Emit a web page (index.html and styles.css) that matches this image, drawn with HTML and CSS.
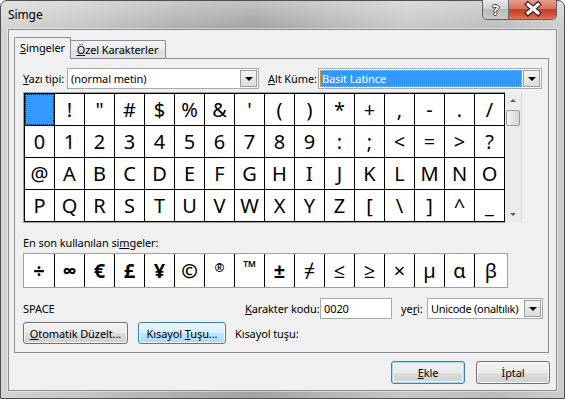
FILE: index.html
```html
<!DOCTYPE html>
<html lang="tr">
<head>
    <meta charset="UTF-8">
    <title>Simge</title>
    <link rel="stylesheet" href="styles.css">
</head>
<body>
<div class="window">
    <div class="titlebar">
        <span class="title">Simge</span>
        <div class="caption">
            <span class="cap help">?</span>
            <span class="cap close">
                <svg width="46" height="19" viewBox="0 0 46 19">
                    <path d="M18 4.5 L28 13 M28 4.5 L18 13" stroke="#3b2a26" stroke-width="5.5" stroke-linecap="square"/>
                    <path d="M18 4.5 L28 13 M28 4.5 L18 13" stroke="#fff" stroke-width="3" stroke-linecap="square"/>
                </svg>
            </span>
        </div>
    </div>

    <div class="client">
        <div class="tabs">
            <span class="tab active"><u>S</u>imgeler</span>
            <span class="tab"><u>Ö</u>zel Karakterler</span>
        </div>

        <div class="panel">
            <div class="row font-row">
                <label class="lbl-font"><u>Y</u>azı tipi:</label>
                <div class="combo combo-font">
                    <span class="combo-text">(normal metin)</span>
                    <span class="drop"></span>
                </div>
                <label class="lbl-subset"><u>A</u>lt Küme:</label>
                <div class="combo combo-subset">
                    <span class="combo-text sel">Basit Latince</span>
                    <span class="drop"></span>
                </div>
            </div>

            <div class="charmap">
                <div class="chargrid">
                    <span class="cell current"></span><span class="cell">!</span><span class="cell">"</span><span class="cell">#</span>
                    <span class="cell">$</span><span class="cell">%</span><span class="cell">&amp;</span><span class="cell">'</span>
                    <span class="cell">(</span><span class="cell">)</span><span class="cell">*</span><span class="cell">+</span>
                    <span class="cell">,</span><span class="cell">-</span><span class="cell">.</span><span class="cell">/</span>

                    <span class="cell">0</span><span class="cell">1</span><span class="cell">2</span><span class="cell">3</span>
                    <span class="cell">4</span><span class="cell">5</span><span class="cell">6</span><span class="cell">7</span>
                    <span class="cell">8</span><span class="cell">9</span><span class="cell">:</span><span class="cell">;</span>
                    <span class="cell">&lt;</span><span class="cell">=</span><span class="cell">&gt;</span><span class="cell">?</span>

                    <span class="cell">@</span><span class="cell">A</span><span class="cell">B</span><span class="cell">C</span>
                    <span class="cell">D</span><span class="cell">E</span><span class="cell">F</span><span class="cell">G</span>
                    <span class="cell">H</span><span class="cell">I</span><span class="cell">J</span><span class="cell">K</span>
                    <span class="cell">L</span><span class="cell">M</span><span class="cell">N</span><span class="cell">O</span>

                    <span class="cell">P</span><span class="cell">Q</span><span class="cell">R</span><span class="cell">S</span>
                    <span class="cell">T</span><span class="cell">U</span><span class="cell">V</span><span class="cell">W</span>
                    <span class="cell">X</span><span class="cell">Y</span><span class="cell">Z</span><span class="cell">[</span>
                    <span class="cell">\</span><span class="cell">]</span><span class="cell">^</span><span class="cell">_</span>
                </div>
                <div class="vscroll">
                    <span class="arrow up"></span>
                    <span class="thumb"></span>
                    <span class="track"></span>
                    <span class="arrow down"></span>
                </div>
            </div>

            <div class="recent-label">En son kullanılan si<u>m</u>geler:</div>
            <div class="recent">
                <span class="rc bold">÷</span><span class="rc bold">∞</span><span class="rc bold">€</span><span class="rc bold">£</span>
                <span class="rc bold">¥</span><span class="rc bold">©</span><span class="rc bold small">®</span><span class="rc bold small tm">™</span>
                <span class="rc bold">±</span><span class="rc">≠</span><span class="rc">≤</span><span class="rc">≥</span>
                <span class="rc">×</span><span class="rc">µ</span><span class="rc">α</span><span class="rc">β</span>
            </div>

            <div class="row code-row">
                <span class="char-name">SPACE</span>
                <label class="lbl-code"><u>K</u>arakter kodu:</label>
                <div class="input">0020</div>
                <label class="lbl-from">ye<u>r</u>i:</label>
                <div class="combo combo-from">
                    <span class="combo-text">Unicode (onaltılık)</span>
                    <span class="drop"></span>
                </div>
            </div>

            <div class="row btn-row">
                <button class="btn btn-auto"><u>O</u>tomatik Düzelt...</button>
                <button class="btn btn-key hover">Kısayol <u>T</u>uşu...</button>
                <span class="key-label">Kısayol tuşu:</span>
            </div>
        </div>

        <div class="footer">
            <button class="btn btn-dlg default"><u>E</u>kle</button>
            <button class="btn btn-dlg">İptal</button>
        </div>
    </div>
</div>
</body>
</html>
```

FILE: styles.css
```css
*{margin:0; padding:0; box-sizing:border-box;}
body{width:565px; height:399px; overflow:hidden; background:#fff; font-family:"Noto Sans","Open Sans",sans-serif; font-size:11px; letter-spacing:-0.1px; color:#000;}
u{text-decoration:underline; text-underline-offset:1px;}
button{font-family:inherit; font-size:inherit; letter-spacing:inherit; color:#000; white-space:nowrap;}
label,span{white-space:nowrap;}

/* window frame */
.window{width:565px; height:399px; border:1px solid #4e4e4e; border-radius:7px 7px 0 0; padding:0 7px 7px 7px; display:flex; flex-direction:column;
    background:
        linear-gradient(180deg, rgba(255,255,255,.35) 0, rgba(255,255,255,0) 28px),
        linear-gradient(90deg, #d4d4d4 0%, #c6c6c6 14%, #aeaeae 32%, #a2a2a2 45%, #b6b6b6 58%, #c7c7c7 72%, #bcbcbc 88%, #cdcdcd 100%);}
.titlebar{height:28px; display:flex; justify-content:space-between; align-items:flex-start;}
.title{margin-top:6px; font-size:12px; line-height:16px; color:#000;}
.caption{display:flex; margin-top:-1px; height:20px; border:1px solid #5f5f5f; border-top:none; border-radius:0 0 5px 5px; overflow:hidden;}
.cap{display:flex; align-items:center; justify-content:center; height:19px;}
.help{width:26px; border-right:1px solid #6a6a6a; background:linear-gradient(180deg,#e9e9e9 0%,#d2d2d2 45%,#b9b9b9 50%,#c9c9c9 100%); color:#fff; font-weight:bold; font-size:14px; line-height:19px;
    text-shadow:1px 0 0 #444,-1px 0 0 #444,0 1px 0 #444,0 -1px 0 #444;}
.close{width:47px; background:linear-gradient(180deg,#e6a08f 0%,#d4735a 45%,#c4401f 50%,#d2553a 80%,#e07a5e 100%);}

.client{height:362px; border:1px solid #8b8b8b; background:#f0f0f0; box-shadow:0 0 0 1px rgba(255,255,255,.45);}

/* tabs */
.tabs{display:flex; align-items:flex-end; height:21px; margin:7px 0 0 5px;}
.tab{display:flex; align-items:center; justify-content:center; border:1px solid #898c95; border-bottom:none; border-radius:2px 2px 0 0; flex-shrink:0;}
.tab.active{position:relative; z-index:1; width:57px; height:22px; margin-bottom:-1px; background:#f0f0f0; padding-bottom:2px;}
.tab:not(.active){width:96px; height:18px; margin-left:-1px; border-left:none; background:linear-gradient(180deg,#f3f3f3 0%,#ebebeb 50%,#dedede 51%,#e2e2e2 100%);}

.panel{width:535px; height:295px; margin-left:5px; border:1px solid #898c95; padding-left:8px; background:#f0f0f0;}
.row{display:flex; align-items:center;}
.row > *{flex-shrink:0;}

/* combos */
.combo{height:21px; display:flex; align-items:center; border:1px solid #a9a9a9; background:#fff; padding:1px;}
.combo-text{flex:1; height:17px; line-height:17px; padding-left:2px; overflow:hidden;}
.combo-text.sel{background:#3399ff; color:#fff; outline:1px dotted #f5a340; outline-offset:-1px; margin-right:1px;}
.drop{width:17px; height:17px; flex-shrink:0; border:1px solid #9c9c9c; background:linear-gradient(180deg,#f4f4f4,#dcdcdc); display:flex; align-items:center; justify-content:center;}
.drop::after{content:""; border-left:4px solid transparent; border-right:4px solid transparent; border-top:4px solid #000;}

.font-row{height:21px; margin-top:9px;}
.lbl-font{width:44px;}
.combo-font{width:192px;}
.lbl-subset{width:50px; margin-left:9px;}
.combo-subset{width:224px;}

/* character map */
.charmap{display:flex; margin-top:3px; height:131px;}
.chargrid{display:grid; grid-template-columns:repeat(16,29px); grid-auto-rows:31px; gap:1px; padding:1px; background:#000;
    border:1px solid #a0a0a0; border-right:none;}
.cell{background:#fff; display:flex; align-items:center; justify-content:center; font-size:20px; line-height:1; letter-spacing:0;}
.cell.current{background:#3399ff; outline:1px dotted #000; outline-offset:-1px;}
.vscroll{width:17px; height:131px; display:flex; flex-direction:column; background:#ececec; border-right:1px solid #dadada;}
.arrow{height:17px; display:flex; align-items:center; justify-content:center;}
.arrow.up::after{content:""; border-left:3px solid transparent; border-right:3px solid transparent; border-bottom:3px solid #5c5c5c;}
.arrow.down::after{content:""; border-left:3px solid transparent; border-right:3px solid transparent; border-top:3px solid #5c5c5c;}
.thumb{height:16px; margin:1px 1px 0 1px; border:1px solid #979797; border-radius:2px; background:linear-gradient(90deg,#f6f6f6,#e2e2e2 50%,#d6d6d6);}
.track{flex:1;}

.recent-label{margin-top:12px; height:15px; line-height:15px;}
.recent{display:grid; grid-template-columns:30px repeat(14,29px) 32px; grid-auto-rows:33px; gap:1px; width:485px; height:35px; margin-top:3px;
    border:1px solid #a0a0a0; background:#000;}
.recent .rc{background:#fff; display:flex; align-items:center; justify-content:center; font-size:20px; line-height:1; letter-spacing:0;}
.rc.bold{font-weight:bold;}
.rc.small{font-size:12px; align-items:flex-start; padding-top:8px;}
.rc.tm{font-size:17px; padding-top:4px;}

/* code row */
.code-row{height:21px; margin-top:10px;}
.char-name{width:222px;}
.lbl-code{width:75px;}
.input{width:72px; height:21px; border:1px solid #a9a9a9; background:#fff; line-height:19px; padding-left:3px;}
.lbl-from{width:26px; margin-left:9px;}
.combo-from{width:116px;}
.combo-from .combo-text{letter-spacing:-0.3px;}

/* buttons */
.btn-row{height:22px; margin-top:3px;}
.btn{height:22px; border:1px solid #707070; border-radius:3px; box-shadow:inset 0 0 0 1px #fbfbfb;
    background:linear-gradient(180deg,#f2f2f2 0%,#ebebeb 50%,#dddddd 51%,#cfcfcf 100%);}
.btn-auto{width:105px;}
.btn-key{width:88px; margin-left:10px;}
.btn.hover{border-color:#3c7fb1; background:linear-gradient(180deg,#eaf6fd 0%,#d9f0fc 50%,#bee6fd 51%,#a7d9f5 100%);}
.key-label{margin-left:9px;}

.footer{display:flex; justify-content:flex-end; gap:11px; margin-top:8px; padding-right:6px;}
.btn-dlg{width:74px; height:23px;}
.btn.default{border-color:#3c7fb1; box-shadow:inset 0 0 0 1px #a8dcf5, inset 0 0 0 2px #e8f4fb;}
```
